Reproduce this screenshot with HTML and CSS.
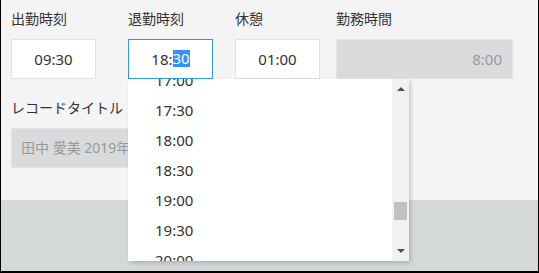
FILE: index.html
```html
<!DOCTYPE html>
<html lang="ja">
<head>
<meta charset="utf-8">
<title>勤務時間</title>
<link rel="stylesheet" href="styles.css">
</head>
<body>
<div class="frame">
  <div class="form">
    <div class="row">
      <div class="field f1">
        <div class="label">出勤時刻</div>
        <div class="input">09:30</div>
      </div>
      <div class="field f2">
        <div class="label">退勤時刻</div>
        <div class="input focused">18:<span class="sel">30</span></div>
        <div class="dropdown">
          <div class="list">
            <div class="item">17:00</div>
            <div class="item">17:30</div>
            <div class="item">18:00</div>
            <div class="item">18:30</div>
            <div class="item">19:00</div>
            <div class="item">19:30</div>
            <div class="item">20:00</div>
          </div>
          <div class="scrollbar">
            <div class="arrow up"></div>
            <div class="track"><div class="thumb"></div></div>
            <div class="arrow down"></div>
          </div>
        </div>
      </div>
      <div class="field f3">
        <div class="label">休憩</div>
        <div class="input">01:00</div>
      </div>
      <div class="field f4">
        <div class="label">勤務時間</div>
        <div class="input readonly total">8:00</div>
      </div>
    </div>
    <div class="row row2">
      <div class="field">
        <div class="label">レコードタイトル</div>
        <div class="input readonly title">田中 愛美 2019年</div>
      </div>
    </div>
  </div>
  <div class="footer"></div>
</div>
</body>
</html>
```

FILE: styles.css
```css
html, body {
  margin: 0;
  padding: 0;
}
body {
  font-family: "Noto Sans", "Noto Sans CJK JP", sans-serif;
  color: #333;
  width: 539px;
  height: 273px;
  overflow: hidden;
}
.frame {
  box-sizing: border-box;
  width: 539px;
  height: 273px;
  border-left: 1px solid #000;
  border-right: 1px solid #000;
  border-bottom: 2px solid #000;
  display: flex;
  flex-direction: column;
}
.form {
  height: 200px;
  background: #f4f4f4;
  padding: 9px 0 0 10px;
  box-sizing: border-box;
}
.footer {
  flex: 1;
  background: #d4d8d8;
}
.row {
  display: flex;
}
.row2 {
  margin-top: 19px;
}
.field {
  position: relative;
}
.f1 { width: 117px; }
.f2 { width: 107px; }
.f3 { width: 101px; }
.label {
  font-size: 14px;
  line-height: 20px;
  height: 20px;
  margin-bottom: 10px;
  white-space: nowrap;
  color: #333;
}
.input {
  box-sizing: border-box;
  width: 85px;
  height: 40px;
  border: 1px solid #e3e3e3;
  background: #fff;
  font-size: 15px;
  line-height: 38px;
  text-align: center;
  white-space: nowrap;
  overflow: hidden;
}
.focused {
  border-color: #3498db;
}
.sel {
  display: inline-block;
  background: #3390ff;
  color: #fff;
  line-height: 17px;
  vertical-align: 1px;
}
.readonly {
  background: #d9dadc;
  border-color: #e4e5e6;
  color: #999;
}
.total {
  width: 177px;
  text-align: right;
  padding-right: 10px;
}
.title {
  width: 380px;
  text-align: left;
  padding-left: 9px;
  font-size: 14px;
}
.dropdown {
  position: absolute;
  left: 0;
  top: 70px;
  width: 281px;
  height: 182px;
  background: #fff;
  box-shadow: 2px 2px 4px rgba(0, 0, 0, 0.18);
  display: flex;
  overflow: hidden;
  z-index: 5;
}
.list {
  flex: 1;
  margin-top: -14px;
}
.item {
  height: 30px;
  line-height: 30px;
  font-size: 15px;
  padding-left: 27px;
  color: #333;
}
.scrollbar {
  width: 17px;
  background: #f1f1f1;
  display: flex;
  flex-direction: column;
}
.arrow {
  height: 17px;
  display: flex;
  align-items: center;
  justify-content: center;
}
.arrow::before {
  content: "";
  width: 0;
  height: 0;
  border-left: 4px solid transparent;
  border-right: 4px solid transparent;
}
.up::before {
  border-bottom: 4px solid #505050;
  margin-top: 2px;
}
.down::before {
  border-top: 4px solid #505050;
  margin-bottom: 4px;
}
.track {
  flex: 1;
  position: relative;
}
.thumb {
  position: absolute;
  left: 2px;
  right: 2px;
  top: 106px;
  height: 18px;
  background: #c1c1c1;
}
```
